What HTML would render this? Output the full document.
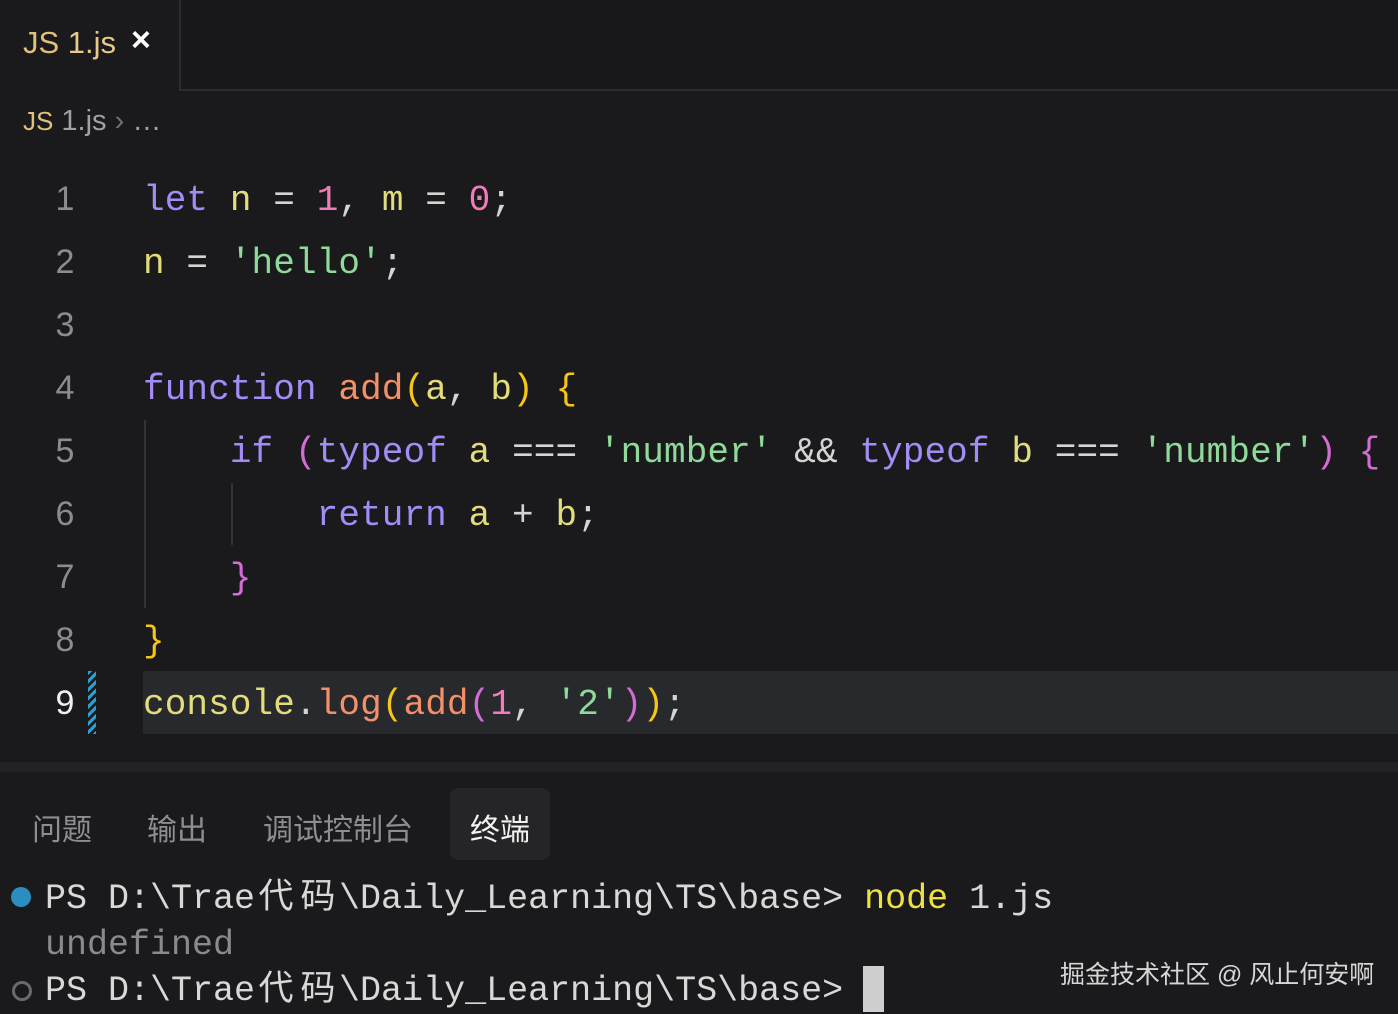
<!DOCTYPE html>
<html><head><meta charset="utf-8"><style>
body{margin:0;width:1398px;height:1013px;background:#1a1a1c;overflow:hidden;position:relative;font-family:"Liberation Sans","Noto Sans CJK SC",sans-serif}
.abs{position:absolute}
.code{position:absolute;left:143px;font-family:"Liberation Mono","Noto Sans CJK SC",monospace;font-size:36px;letter-spacing:0.1px;line-height:63px;white-space:pre;color:#d4d4d4}
.ln{position:absolute;left:40px;width:50px;text-align:center;font-family:"Liberation Sans",sans-serif;font-size:34px;line-height:63px;color:#8b8b90}
.k{color:#a48cf6}.v{color:#e2dc7c}.n{color:#f27cb8}.s{color:#8fd99a}.f{color:#f2906a}.y{color:#f5c518}.p{color:#d46bd6}.w{color:#d8d8d8}
.term{position:absolute;left:45px;font-family:"Liberation Mono","Noto Sans CJK SC",monospace;font-size:35px;line-height:46px;white-space:pre;color:#d8d8d8}
.cj{display:inline-block;width:42px;text-align:center;letter-spacing:0}
</style></head><body>
<div class="abs" style="left:0;top:0;width:179px;height:90px;background:#1a1a1c"></div>
<div class="abs" style="left:179px;top:0;width:1219px;height:89px;background:#18181a;border-left:2px solid #2c2c2e;border-bottom:2px solid #2c2c2e"></div>
<div class="abs" style="left:23px;top:25px;font-size:31px;color:#e0c07a">JS <span style="color:#e8c98a">1.js</span></div>
<div class="abs" style="left:131px;top:21px;font-size:34px;color:#fff;font-weight:bold">×</div>
<div class="abs" style="left:23px;top:105px;font-size:29px;color:#a0a0a6"><span style="color:#e0c07a;font-size:26px">JS</span> 1.js <span style="color:#707076">›</span> …</div>

<div class="abs" style="left:143px;top:671px;width:1255px;height:63px;background:#27292d"></div>
<div class="abs" style="left:144px;top:420px;width:2px;height:188px;background:#333336"></div>
<div class="abs" style="left:231px;top:483px;width:2px;height:62px;background:#333336"></div>
<div class="abs" style="left:88px;top:671px;width:8px;height:63px;background:repeating-linear-gradient(135deg,#2a9fd0 0 3px,transparent 3px 6px)"></div>

<div class="ln" style="top:168px">1</div>
<div class="ln" style="top:231px">2</div>
<div class="ln" style="top:294px">3</div>
<div class="ln" style="top:357px">4</div>
<div class="ln" style="top:420px">5</div>
<div class="ln" style="top:483px">6</div>
<div class="ln" style="top:546px">7</div>
<div class="ln" style="top:609px">8</div>
<div class="ln" style="top:672px;color:#f0f0f0">9</div>

<div class="code" style="top:169px"><span class="k">let</span> <span class="v">n</span> = <span class="n">1</span>, <span class="v">m</span> = <span class="n">0</span>;</div>
<div class="code" style="top:232px"><span class="v">n</span> = <span class="s">'hello'</span>;</div>
<div class="code" style="top:358px"><span class="k">function</span> <span class="f">add</span><span class="y">(</span><span class="v">a</span>, <span class="v">b</span><span class="y">)</span> <span class="y">{</span></div>
<div class="code" style="top:421px">    <span class="k">if</span> <span class="p">(</span><span class="k">typeof</span> <span class="v">a</span> === <span class="s">'number'</span> &amp;&amp; <span class="k">typeof</span> <span class="v">b</span> === <span class="s">'number'</span><span class="p">)</span> <span class="p">{</span></div>
<div class="code" style="top:484px">        <span class="k">return</span> <span class="v">a</span> + <span class="v">b</span>;</div>
<div class="code" style="top:547px">    <span class="p">}</span></div>
<div class="code" style="top:610px"><span class="y">}</span></div>
<div class="code" style="top:673px"><span class="v">console</span>.<span class="f">log</span><span class="y">(</span><span class="f">add</span><span class="p">(</span><span class="n">1</span>, <span class="s">'2'</span><span class="p">)</span><span class="y">)</span>;</div>

<div class="abs" style="left:0;top:762px;width:1398px;height:10px;background:#222225"></div>
<div class="abs" style="left:450px;top:788px;width:100px;height:72px;background:#252528;border-radius:8px"></div>
<div class="abs" style="left:32px;top:805px;font-size:30px;color:#8d8d92">问题</div>
<div class="abs" style="left:147px;top:805px;font-size:30px;color:#8d8d92">输出</div>
<div class="abs" style="left:263px;top:805px;font-size:30px;color:#8d8d92">调试控制台</div>
<div class="abs" style="left:470px;top:805px;font-size:30px;color:#f2f2f2">终端</div>

<div class="abs" style="left:11px;top:887px;width:20px;height:20px;border-radius:50%;background:#2a8fc0"></div>
<div class="abs" style="left:12px;top:981px;width:14px;height:14px;border-radius:50%;border:3px solid #6a6a6e"></div>
<div class="term" style="top:876px">PS D:\Trae<span class="cj">代</span><span class="cj">码</span>\Daily_Learning\TS\base&gt; <span style="color:#f0e040">node</span> 1.js</div>
<div class="term" style="top:922px;color:#8a8a8e">undefined</div>
<div class="term" style="top:968px">PS D:\Trae<span class="cj">代</span><span class="cj">码</span>\Daily_Learning\TS\base&gt; </div>
<div class="abs" style="left:863px;top:966px;width:21px;height:46px;background:#cfcfcf"></div>
<div class="abs" style="left:1060px;top:955px;font-size:25px;color:#d6d6d6">掘金技术社区 @ 风止何安啊</div>
</body></html>
